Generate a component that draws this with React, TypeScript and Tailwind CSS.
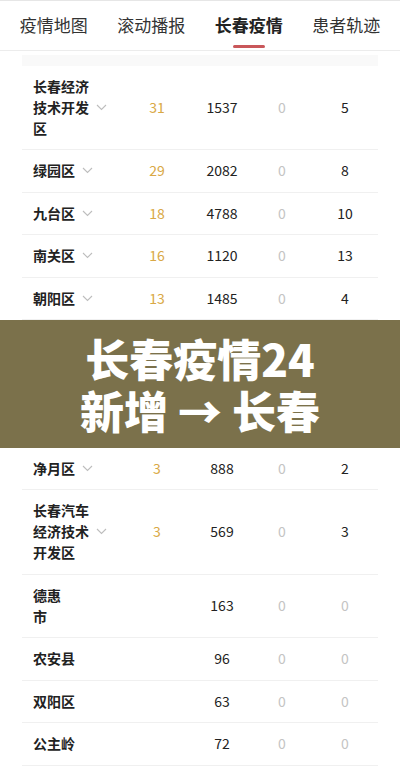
import React from "react";

type Row = {
  name: string[];
  add: string;
  total: string;
  zero: string;
  last: string;
  lastGray?: boolean;
  chevron: boolean;
};

const top: Row[] = [
  { name: ["长春经济", "技术开发", "区"], add: "31", total: "1537", zero: "0", last: "5", chevron: true },
  { name: ["绿园区"], add: "29", total: "2082", zero: "0", last: "8", chevron: true },
  { name: ["九台区"], add: "18", total: "4788", zero: "0", last: "10", chevron: true },
  { name: ["南关区"], add: "16", total: "1120", zero: "0", last: "13", chevron: true },
  { name: ["朝阳区"], add: "13", total: "1485", zero: "0", last: "4", chevron: true },
];

const bottom: Row[] = [
  { name: ["净月区"], add: "3", total: "888", zero: "0", last: "2", chevron: true },
  { name: ["长春汽车", "经济技术", "开发区"], add: "3", total: "569", zero: "0", last: "3", chevron: true },
  { name: ["德惠", "市"], add: "", total: "163", zero: "0", last: "0", lastGray: true, chevron: false },
  { name: ["农安县"], add: "", total: "96", zero: "0", last: "0", lastGray: true, chevron: false },
  { name: ["双阳区"], add: "", total: "63", zero: "0", last: "0", lastGray: true, chevron: false },
  { name: ["公主岭"], add: "", total: "72", zero: "0", last: "0", lastGray: true, chevron: false },
];

function Chevron() {
  return (
    <svg width="11" height="7" viewBox="0 0 11 7" className="ml-[7px] shrink-0">
      <path d="M1 1l4.5 4.5L10 1" fill="none" stroke="#bdbdbd" strokeWidth="1.1" />
    </svg>
  );
}

function TableRow({ r }: { r: Row }) {
  return (
    <div className="grid grid-cols-[105px_60px_70px_50px_71px] items-center border-b border-[#f0f0f0] py-[10.25px] leading-[21px] text-[14px]">
      <div className="flex items-center pl-[11px]">
        <div className="font-bold text-[#222]">
          {r.name.map((l, i) => (
            <div key={i}>{l}</div>
          ))}
        </div>
        {r.chevron && <Chevron />}
      </div>
      <div className="text-center text-[#d9a845]">{r.add}</div>
      <div className="text-center text-[#222]">{r.total}</div>
      <div className="text-center text-[#c4c4c4]">{r.zero}</div>
      <div className={"pl-[5px] text-center " + (r.lastGray ? "text-[#c4c4c4]" : "text-[#222]")}>{r.last}</div>
    </div>
  );
}

export default function App() {
  const tabs = ["疫情地图", "滚动播报", "长春疫情", "患者轨迹"];
  return (
    <div
      className="w-[400px] h-[769px] overflow-hidden bg-white border-t border-[#e6e6e6]"
      style={{ fontFamily: '"Noto Sans CJK SC", "Noto Sans", sans-serif' }}
    >
      <div className="grid grid-cols-4 px-[5px] h-[50px] border-b border-[#ececec]">
        {tabs.map((t, i) => (
          <div key={t} className="relative flex items-center justify-center">
            <span
              className={
                "text-[17px] leading-[24px] -mt-[2px] " +
                (i === 2 ? "font-bold text-[#222]" : "text-[#333]")
              }
            >
              {t}
            </span>
            {i === 2 && (
              <div className="absolute bottom-[2px] left-1/2 -translate-x-1/2 w-[32px] h-[3px] rounded-full bg-[#c9575a]" />
            )}
          </div>
        ))}
      </div>
      <div className="mx-[22px]">
        <div className="mt-[4px] h-[10.5px] bg-[#f9f9f9]" />
        {top.map((r, i) => (
          <TableRow key={"t" + i} r={r} />
        ))}
        <div className="-mx-[22px] h-[127.5px] bg-[#7b714b] flex items-center justify-center">
          <div className="text-white font-black text-[44px] leading-[52px] text-center">
            长春疫情24
            <br />
            新增 → 长春
          </div>
        </div>
        {bottom.map((r, i) => (
          <TableRow key={"b" + i} r={r} />
        ))}
      </div>
    </div>
  );
}
